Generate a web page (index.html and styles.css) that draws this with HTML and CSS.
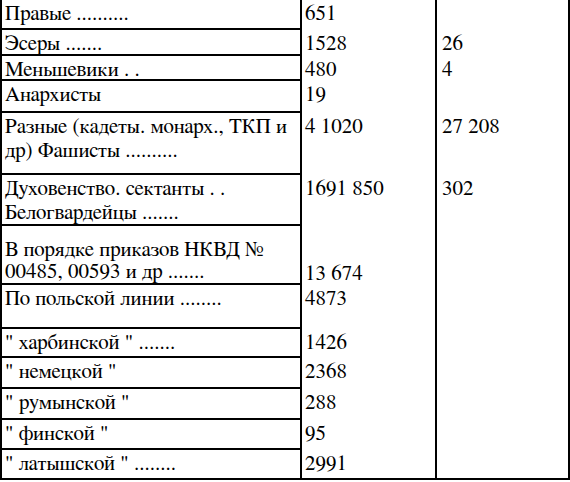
FILE: index.html
```html
<!DOCTYPE html>
<html lang="ru">
<head>
<meta charset="utf-8">
<title>Таблица</title>
<link rel="stylesheet" href="styles.css">
</head>
<body>
<div class="sheet">
  <div class="c1">Правые ..........</div><div class="c2">651</div><div class="c3"></div>
  <div class="c1">Эсеры .......</div><div class="c2">1528</div><div class="c3">26</div>
  <div class="c1">Меньшевики . .</div><div class="c2">480</div><div class="c3">4</div>
  <div class="c1">Анархисты</div><div class="c2">19</div><div class="c3"></div>
  <div class="c1">Разные (кадеты. монарх., ТКП и др) Фашисты ..........</div><div class="c2">4 1020</div><div class="c3">27 208</div>
  <div class="c1">Духовенство. сектанты . . Белогвардейцы .......</div><div class="c2">1691 850</div><div class="c3">302</div>
  <div class="c1 bottom">В порядке приказов НКВД № 00485, 00593 и др .......</div><div class="c2 bottom">13 674</div><div class="c3"></div>
  <div class="c1">По польской линии ........</div><div class="c2">4873</div><div class="c3"></div>
  <div class="c1">" харбинской " .......</div><div class="c2">1426</div><div class="c3"></div>
  <div class="c1">" немецкой "</div><div class="c2">2368</div><div class="c3"></div>
  <div class="c1">" румынской "</div><div class="c2">288</div><div class="c3"></div>
  <div class="c1">" финской "</div><div class="c2">95</div><div class="c3"></div>
  <div class="c1 last">" латышской " ........</div><div class="c2 last">2991</div><div class="c3 last"></div>
</div>
</body>
</html>
```

FILE: styles.css
```css
html, body {
  margin: 0;
  padding: 0;
  background: #fff;
}

.sheet {
  display: grid;
  grid-template-columns: 302px 135px 133px;
  grid-template-rows: 30px 26px 25px 32px 62px 51px 59px 44px 29px 31px 31px 30px 30px;
  width: 570px;
  font-family: FreeSerif, "Liberation Serif", serif;
  font-size: 21px;
  line-height: 24px;
  color: #000;
}

.c1, .c2, .c3 {
  box-sizing: border-box;
  padding: 2px 4px 0 4px;
  overflow: hidden;
}

.c1 {
  border-left: 2px solid #000;
  border-right: 2px solid #000;
  border-bottom: 2px solid #000;
  padding-left: 3px;
}

.c2 {
  border-right: 2px solid #000;
  padding-left: 3px;
}

.c3 {
  border-right: 2px solid #000;
  padding-left: 5px;
}

.bottom {
  display: flex;
  align-items: flex-end;
  line-height: 22px;
  padding-bottom: 0;
}

.last {
  border-bottom: 2px solid #000;
}
```
